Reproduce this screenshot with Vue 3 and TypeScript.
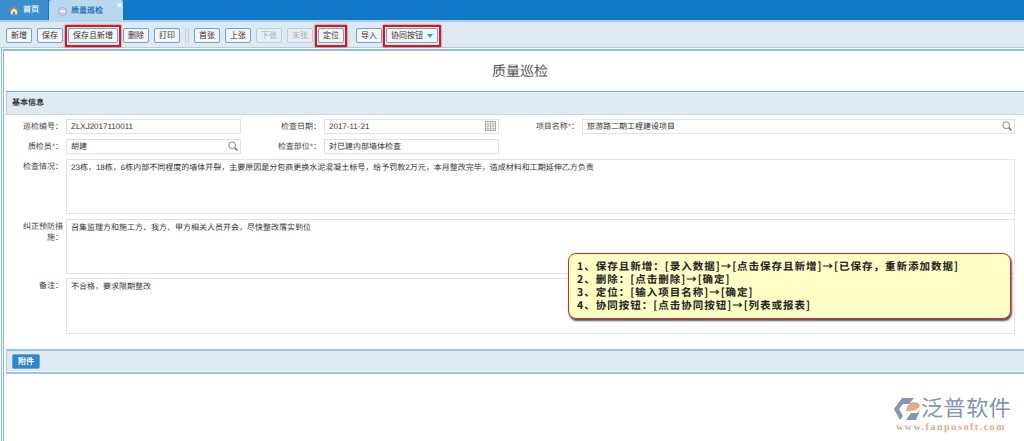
<script setup lang="ts">
interface Tool { label: string; disabled?: boolean; marked?: boolean; sep?: 'line' | 'gap'; arrow?: boolean }
const tools: Tool[] = [
  { label: '新增' }, { label: '保存' }, { label: '保存且新增', marked: true }, { label: '删除' }, { label: '打印' },
  { label: '', sep: 'line' },
  { label: '首张' }, { label: '上张' }, { label: '下张', disabled: true }, { label: '末张', disabled: true },
  { label: '定位', marked: true }, { label: '', sep: 'gap' }, { label: '导入' },
  { label: '协同按钮', marked: true, arrow: true },
]
const tips = [
  '1、保存且新增\uFF1A[录入数据]→[点击保存且新增]→[已保存\uFF0C重新添加数据]',
  '2、删除\uFF1A[点击删除]→[确定]',
  '3、定位\uFF1A[输入项目名称]→[确定]',
  '4、协同按钮\uFF1A[点击协同按钮]→[列表或报表]',
]
const colon = '\uFF1A'
const situation = '23栋\uFF0C18栋\uFF0C6栋内部不同程度的墙体开裂\uFF0C主要原因是分包商更换水泥混凝土标号\uFF0C给予罚款2万元\uFF0C本月整改完毕\uFF0C造成材料和工期延伸乙方负责'
const action = '召集监理方和施工方、我方、甲方相关人员开会\uFF0C尽快整改落实到位'
const remark = '不合格\uFF0C要求限期整改'
</script>

<template>
  <div class="page">
    <div class="tabs">
      <div class="tab home">
        <svg width="10" height="10" viewBox="0 0 10 10"><path d="M5 .8 0 5.2l.8.8L5 2.4 9.2 6l.8-.8z" fill="#d9742a"/><path d="M1.8 5.8 5 3.2l3.2 2.6v3.6H6V6.8H4v2.6H1.8z" fill="#f3e3b8"/></svg>
        <span>首页</span>
      </div>
      <div class="tab active">
        <svg width="9" height="9" viewBox="0 0 9 9"><circle cx="4.5" cy="4.5" r="4" fill="#c9d4e2" stroke="#8fa2bb" stroke-width=".7"/><rect x="2" y="3.8" width="5" height="1.4" fill="#fff"/></svg>
        <span>质量巡检</span>
        <i class="close">×</i>
      </div>
    </div>
    <div class="toolbar">
      <template v-for="(t, i) in tools" :key="i">
        <span v-if="t.sep === 'line'" class="sep"></span>
        <span v-else-if="t.sep === 'gap'" class="gap"></span>
        <button v-else class="btn" :class="{ disabled: t.disabled, marked: t.marked, wide: t.arrow }">
          {{ t.label }}<i v-if="t.arrow" class="arrow"></i>
        </button>
      </template>
    </div>
    <div class="outer">
      <div class="frame">
        <h1 class="title">质量巡检</h1>
        <div class="info">基本信息</div>
        <div class="form">
          <label>巡检编号{{ colon }}</label>
          <div class="field">ZLXJ2017110011</div>
          <label>检查日期{{ colon }}</label>
          <div class="field">2017-11-21
            <svg class="ico" width="11" height="10" viewBox="0 0 11 10"><rect x=".5" y=".5" width="10" height="9" fill="none" stroke="#aaa"/><path d="M0 3h11M0 5.2h11M0 7.4h11M3 1v9M5.5 1v9M8 1v9" stroke="#aaa" stroke-width=".7"/></svg>
          </div>
          <label>项目名称<b>*</b>{{ colon }}</label>
          <div class="field">旅游路二期工程建设项目
            <svg class="ico" width="10" height="10" viewBox="0 0 10 10"><circle cx="4.2" cy="4.2" r="3.4" fill="none" stroke="#888" stroke-width="1"/><path d="M6.8 6.8 9.4 9.4" stroke="#666" stroke-width="1.4"/></svg>
          </div>

          <label>质检员<b>*</b>{{ colon }}</label>
          <div class="field">胡建
            <svg class="ico" width="10" height="10" viewBox="0 0 10 10"><circle cx="4.2" cy="4.2" r="3.4" fill="none" stroke="#888" stroke-width="1"/><path d="M6.8 6.8 9.4 9.4" stroke="#666" stroke-width="1.4"/></svg>
          </div>
          <label>检查部位<b>*</b>{{ colon }}</label>
          <div class="field">对已建内部墙体检查</div>
          <span></span><span></span>

          <label>检查情况{{ colon }}</label>
          <div class="area">{{ situation }}</div>
          <label class="two">纠正预防措<br />施{{ colon }}</label>
          <div class="area">{{ action }}</div>
          <label class="last">备注{{ colon }}</label>
          <div class="area last">{{ remark }}</div>
        </div>
        <div class="attach"><button class="attach-btn">附件</button></div>
      </div>
    </div>
    <div class="callout">
      <div v-for="t in tips" :key="t">{{ t }}</div>
    </div>
    <div class="logo">
      <div class="logo-top">
        <svg width="27" height="24" viewBox="0 0 27 24">
          <path d="M8 1h12l-5 6H9L5 12l4 7-3 4-6-11z" fill="#8496b4"/>
          <path d="M18 5c4 0 7 1 8 3-1 5-6 6-14 6 1-5 3-8 6-9z" fill="#e9a985"/>
          <path d="M12 23l5-7h6l3-3-4 10z" fill="#8496b4"/>
        </svg>
        <div class="cn">泛普软件</div>
      </div>
      <div class="url">www.fanpusoft.com</div>
    </div>
  </div>
</template>

<style>
html, body { margin: 0; background: #fff; }
</style>

<style scoped>
.page {
  position: relative;
  width: 1024px;
  height: 441px;
  overflow: hidden;
  display: flex;
  flex-direction: column;
  font: 8px/1.2 "Liberation Sans", "Noto Sans CJK SC", sans-serif;
  text-rendering: geometricPrecision;
  color: #333;
  background: #fff;
}
.tabs {
  height: 20px;
  flex: none;
  display: flex;
  background: #0f79c7;
}
.tab {
  display: flex;
  align-items: center;
  gap: 4px;
  font-weight: 700;
}
.home {
  width: 48px;
  padding-left: 9px;
  box-sizing: border-box;
  background: #3a8fcf;
  color: #e8f2fa;
}
.active {
  width: 74px;
  height: 22px;
  margin-left: 1px;
  padding-left: 9px;
  box-sizing: border-box;
  position: relative;
  z-index: 1;
  background: #b8d7f0;
  color: #2a6fb0;
  border-radius: 2px 2px 0 0;
}
.close {
  position: absolute;
  right: 1px;
  top: 0;
  color: #fff;
  font: 700 9px/10px "Liberation Sans", sans-serif;
}
.toolbar {
  height: 28px;
  flex: none;
  box-sizing: border-box;
  padding: 6px 0 0 6px;
  display: flex;
  align-items: flex-start;
  gap: 5px;
  background: #dfe9f2;
  border-top: 2px solid #a9cde9;
  border-bottom: 1px solid #c4c9ce;
}
.btn {
  position: relative;
  height: 15px;
  padding: 0 4px;
  font: 8px/13px "Liberation Sans", "Noto Sans CJK SC", sans-serif;
  color: #333;
  background: #f3f6f9;
  border: 1px solid #6fa6cf;
  border-radius: 2px;
}
.btn.disabled {
  color: #a5adb5;
  border-color: #b6cfe2;
  background: #e6edf3;
}
.btn.marked::after {
  content: "";
  position: absolute;
  inset: -4px -4px -5px;
  border: 2px solid #e0141c;
  box-shadow: 0 0 2px #666;
  pointer-events: none;
}
.btn.wide { display: flex; align-items: center; gap: 4px; padding-right: 4px; margin-left: -1px; }
.arrow {
  width: 0;
  height: 0;
  border: 3px solid transparent;
  border-top: 4px solid #2aa3dd;
  border-bottom: 0;
}
.sep {
  width: 4px;
  height: 15px;
  border-left: 1px solid #c8d0d8;
  border-right: 1px solid #c8d0d8;
  box-sizing: border-box;
}
.gap { width: 2px; }
.outer {
  flex: 1;
  margin-left: 1px;
  padding: 1px 0 0 1px;
  display: flex;
  border-left: 1px solid #8cc0ea;
}
.frame {
  flex: 1;
  padding-left: 2px;
  display: flex;
  flex-direction: column;
  border-left: 1px solid #7db9e8;
  border-top: 2px solid #8cc0ea;
}
.title {
  margin: 0;
  height: 40px;
  flex: none;
  display: flex;
  align-items: center;
  justify-content: center;
  padding-left: 10px;
  font-size: 14px;
  font-weight: 400;
  color: #555;
}
.info {
  height: 24px;
  flex: none;
  box-sizing: border-box;
  display: flex;
  align-items: center;
  padding-left: 5px;
  font-weight: 700;
  background: #dfe9f2;
  border-left: 1px solid #a9cde9;
  border-top: 1px solid #6fb0e2;
  border-bottom: 1px solid #cfd6dc;
}
.form {
  display: grid;
  grid-template-columns: 60px 175px 83px 175px 83px 433px;
  grid-template-rows: 15px 15px 55px 55px 55px;
  row-gap: 5px;
  margin-top: 4px;
}
label {
  text-align: right;
  padding-right: 3px;
  line-height: 15px;
  color: #444;
}
label b { color: #e33; font-weight: 400; }
.field {
  position: relative;
  box-sizing: border-box;
  padding-left: 4px;
  line-height: 14px;
  border: 1px solid #e2e2e2;
  color: #333;
}
.ico { position: absolute; right: 2px; top: 1px; }
.area {
  grid-column: 2 / -1;
  box-sizing: border-box;
  padding: 3px 4px;
  line-height: 10px;
  border: 1px solid #e2e2e2;
  color: #333;
}
label.two { line-height: 11px; padding-top: 2px; }
label.last { grid-column: 1; margin-top: -1px; }
.area.last { height: 56px; margin-top: -1px; }
.attach {
  height: 25px;
  flex: none;
  box-sizing: border-box;
  margin-top: 15px;
  padding: 3px 0 0 5px;
  background: #dfe9f2;
  border-left: 1px solid #a9cde9;
  border-top: 2px solid #98c4ea;
  border-bottom: 2px solid #98c4ea;
  box-shadow: inset 0 -1px 0 #fff;
}
.attach-btn {
  display: block;
  width: 28px;
  height: 15px;
  padding: 0;
  font: 700 8px/13px "Liberation Sans", "Noto Sans CJK SC", sans-serif;
  color: #fff;
  background: #2f86cc;
  border: 1px solid #6fa6cf;
  border-radius: 2px;
}
.callout {
  position: absolute;
  left: 568px;
  top: 253px;
  width: 443px;
  height: 66px;
  box-sizing: border-box;
  padding: 6px 0 0 8px;
  font-family: "Noto Sans CJK SC", "Liberation Sans", sans-serif;
  font-size: 10.5px;
  font-weight: 700;
  line-height: 13px;
  letter-spacing: 1px;
  white-space: nowrap;
  color: #222;
  background: #ffffc6;
  border: 1.5px solid #e0222a;
  border-radius: 8px;
  box-shadow: 1px 2px 2px #555;
}
.logo {
  position: absolute;
  left: 894px;
  top: 396px;
  width: 120px;
}
.logo-top { display: flex; align-items: center; gap: 0; }
.cn {
  font-size: 22px;
  line-height: 25px;
  letter-spacing: .6px;
  color: #8294b2;
}
.url {
  margin-top: 1px;
  padding-left: 2px;
  font: 700 10px/11px "Liberation Serif", serif;
  letter-spacing: 1.5px;
  white-space: nowrap;
  color: #e8a888;
}
</style>
